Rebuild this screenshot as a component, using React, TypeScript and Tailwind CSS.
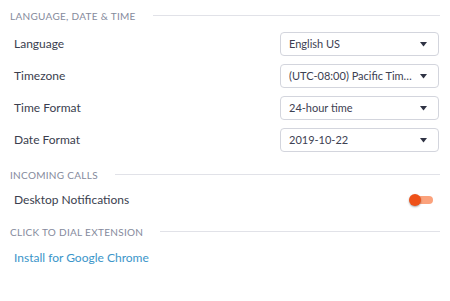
const font = { fontFamily: "Lato, 'Open Sans', sans-serif" };

const SectionHeader = ({ title }: { title: string }) => (
  <div className="flex h-[11px] items-center gap-[17px] pl-[10px] pr-[10px]">
    <span className="text-[10px] uppercase leading-none tracking-[0.3px] text-[#858a9c]">
      {title}
    </span>
    <div className="h-px flex-1 bg-[#e1e2e8]" />
  </div>
);

const Select = ({ value }: { value: string }) => (
  <div className="flex h-[24px] w-[159px] items-center justify-between rounded-[4px] border border-[#d3d5dd] bg-white pl-[8px] pr-[11px]">
    <span className="overflow-hidden whitespace-nowrap text-[11px] text-[#3d4152]">{value}</span>
    <svg width="7" height="5" viewBox="0 0 7 5" className="ml-[3px] shrink-0">
      <path d="M0 0 H7 L3.5 4.5 Z" fill="#2f3344" />
    </svg>
  </div>
);

const SettingRow = ({ label, value }: { label: string; value: string }) => (
  <div className="flex h-[32px] items-center justify-between pl-[14px] pr-[11px]">
    <span className="text-[12px] text-[#3a3e4e]">{label}</span>
    <Select value={value} />
  </div>
);

const Toggle = () => (
  <div className="relative h-[12px] w-[25px]">
    <div className="absolute left-[2px] top-[2px] h-[8px] w-[22px] rounded-full bg-[#fba27c]" />
    <div className="absolute left-0 top-0 h-[12px] w-[12px] rounded-full bg-[#ee5119] shadow-[0_1px_2px_rgba(0,0,0,0.35)]" />
  </div>
);

export default function App() {
  return (
    <div className="h-[301px] w-[450px] bg-white" style={font}>
      <div className="pt-[10px]">
        <SectionHeader title="Language, Date & Time" />
        <div className="mt-[7px] flex flex-col">
          <SettingRow label="Language" value="English US" />
          <SettingRow label="Timezone" value="(UTC-08:00) Pacific Tim…" />
          <SettingRow label="Time Format" value="24-hour time" />
          <SettingRow label="Date Format" value="2019-10-22" />
        </div>
        <div className="mt-[13px]">
          <SectionHeader title="Incoming Calls" />
        </div>
        <div className="mt-[8px] flex h-[24px] items-center justify-between pl-[14px] pr-[16px]">
          <span className="text-[12px] text-[#3a3e4e]">Desktop Notifications</span>
          <Toggle />
        </div>
        <div className="mt-[14px]">
          <SectionHeader title="Click to Dial Extension" />
        </div>
        <div className="mt-[11px] flex h-[20px] items-center pl-[14px]">
          <a className="text-[12px] text-[#3b95c9]">Install for Google Chrome</a>
        </div>
      </div>
    </div>
  );
}
